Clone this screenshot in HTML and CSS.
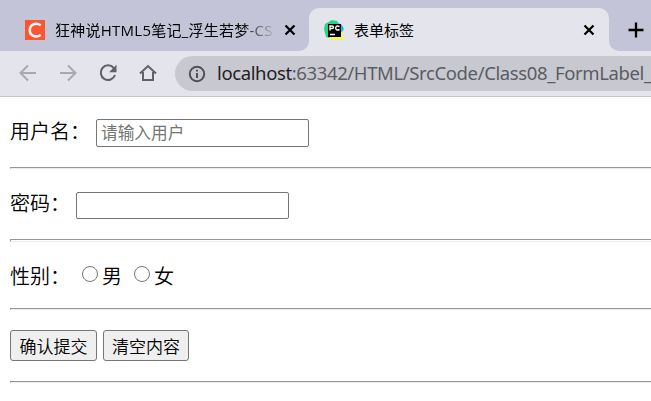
FILE: index.html
```html
<!DOCTYPE html>
<html lang="zh-CN">
<head>
<meta charset="utf-8">
<title>表单标签</title>
<link rel="stylesheet" href="styles.css">
</head>
<body>
<header class="tabs">
  <div class="tab tab-idle">
    <svg class="favicon" viewBox="0 0 20 20"><path fill="#fc5531" d="M0 0h20v20H0z"/><path d="M15.8 5.300C10.500 1.800 4.800 4.800 4.800 10.300c0 5.500 5.700 7.700 11 4.700" fill="none" stroke="#fff" stroke-width="2.500"/></svg>
    <span class="title title-fade">狂神说HTML5笔记_浮生若梦-CS</span>
    <svg class="close" viewBox="0 0 12 12"><path d="M1.500 1.500l9 9m0-9l-9 9"/></svg>
  </div>
  <div class="tab tab-active">
    <svg class="favicon" viewBox="0 0 20 20"><path fill="#21d789" d="M1 4L8 0l5 1 3 5-4 11-7 1-3-1L0 9z"/><path fill="#fcf84a" d="M13 8l5 1 2 10-8 1-7-1 2-5z"/><path fill="#07c3f2" d="M14 3l4 2 2 4-2 3-4-2z"/><path d="M4 4h13v13H4z"/><path d="M6 10.500V6h2q1.500 0 1.500 1.200T8 8.500H6M15.500 6.500q-3.800-1.500-3.800 1.500t3.800 1.500M6 14.500h5" fill="none" stroke="#fff" stroke-width="1.400"/></svg>
    <span class="title">表单标签</span>
    <svg class="close" viewBox="0 0 12 12"><path d="M1.500 1.500l9 9m0-9l-9 9"/></svg>
  </div>
  <div class="tab-end"><svg class="plus" viewBox="0 0 16 16"><path d="M8 .5v15M.5 8h15"/></svg></div>
</header>
<nav class="toolbar">
  <svg class="nav dim" viewBox="0 0 18 18"><path d="M17 9H2m7-7.500L1.500 9 9 16.500"/></svg>
  <svg class="nav dim" viewBox="0 0 18 18"><path d="M1 9h15M9 1.500L16.500 9 9 16.500"/></svg>
  <svg class="nav" viewBox="0 0 18 18"><path d="M14.700 4A7.300 7.300 0 1 0 16 11"/><path class="solid" d="M17.500.8v7.400h-7.400z"/></svg>
  <svg class="nav" viewBox="0 0 18 18"><path d="M1 9.500L9 2l8 7.500M4 8v8h10V8"/></svg>
  <div class="address">
    <svg class="info" viewBox="0 0 18 18"><circle cx="9" cy="9" r="7.200"/><path d="M9 8v5M9 4.700v1.900"/></svg>
    <span class="url"><span class="host">localhost</span>:63342/HTML/SrcCode/Class08_FormLabel_</span>
  </div>
</nav>
<main class="page">
  <form>
    <div class="row row-user"><label>用户名：</label><input class="field" type="text" placeholder="请输入用户"></div>
    <div class="rule"></div>
    <div class="row row-pass"><label>密码：</label><input class="field field-pass" type="password"></div>
    <div class="rule rule-tall"></div>
    <div class="row row-sex"><label>性别：</label><input class="radio first" type="radio" name="sex"><span>男</span><input class="radio second" type="radio" name="sex"><span>女</span></div>
    <div class="rule"></div>
    <div class="row row-buttons"><button class="submit" type="button">确认提交</button><button class="reset" type="button">清空内容</button></div>
    <div class="rule"></div>
  </form>
</main>
</body>
</html>
```
FILE: styles.css
```css
* { box-sizing: border-box; }
body {
  margin: 0;
  width: 651px;
  height: 401px;
  overflow: hidden;
  background: #fff;
  color: #000;
  font-family: "Noto Sans CJK SC", sans-serif;
  font-weight: 350;
}
svg { display: block; flex: none; }
.tabs { display: flex; height: 51px; padding-top: 8px; background: #e4e4ec; box-shadow: inset 0 24px #c4c4d8; }
.tab { display: flex; height: 43px; }
.tab-idle { width: 309px; padding-left: 25px; background: #c4c4d8; border-bottom-right-radius: 10px; }
.tab-active { width: 300px; padding-left: 15px; background: #e4e4ec; border-radius: 10px 10px 0 0; }
.tab-end { flex: 1; padding: 14px 0 0 20px; background: #c4c4d8; border-bottom-left-radius: 10px; }
.favicon { width: 20px; height: 20px; margin-top: 12px; }
.title { flex: none; width: 219px; margin: 11px 0 0 10px; font: 400 15px/22px "Open Sans", "Noto Sans CJK SC", sans-serif; white-space: nowrap; overflow: hidden; }
.tab-active .title { width: 217px; }
.title-fade { letter-spacing: 0.25px; color: transparent; background: linear-gradient(90deg, #000 185px, #b4b4c4 219px); background-clip: text; -webkit-background-clip: text; }
.close { width: 12px; height: 12px; margin: 16px 0 0 10px; fill: none; stroke: #000; stroke-width: 2.2; }
.tab-active .close { margin-left: 12px; }
.plus { width: 16px; height: 16px; margin-left: -1px; fill: none; stroke: #000; stroke-width: 2.3; }
.toolbar { display: flex; height: 46px; padding: 5px 0 0 19px; background: #e4e4ec; border-bottom: 1px solid #c6c6cf; }
.nav { width: 18px; height: 18px; margin: 8px 22px 0 0; fill: none; stroke: #5f6068; stroke-width: 2; }
.nav:nth-of-type(4) { margin: 8px 18px 0 0; }
.dim { stroke: #a8a8b0; }
.solid { fill: #5f6068; stroke: none; }
.address { display: flex; flex: 1; height: 35px; padding-left: 13px; border-radius: 18px 0 0 18px; background: #c8c8d0; overflow: hidden; }
.info { width: 18px; height: 18px; margin-top: 9px; fill: none; stroke: #505158; stroke-width: 2; }
.url { margin: 3px 0 0 11px; font: 400 18.5px/28px "Noto Sans", sans-serif; letter-spacing: -0.38px; color: #5b5c63; white-space: nowrap; }
.host { color: #202124; }
.page { padding-left: 10px; font-size: 20px; line-height: 28px; }
.row { display: flex; }
.row label { white-space: nowrap; }
.row-user { height: 70px; padding-top: 21px; }
.row-pass { height: 70px; padding-top: 22px; }
.row-user label { margin-top: -1px; }
.row-pass label { margin-top: -2px; }
.row-sex { height: 66px; padding-top: 20px; }
.row-buttons { height: 71px; padding-top: 20px; gap: 6px; }
.rule { height: 2px; border-top: 1px solid #979797; border-bottom: 1px solid #ededed; border-left: 1px solid #979797; }
.rule-tall { height: 3px; }
.field { width: 213px; height: 28px; margin: 1px 0 0 6px; padding: 0 4px 2px; border: 1px solid #767676; border-radius: 2px; font: 400 16.7px/24px "Noto Sans CJK SC", sans-serif; }
.field-pass { height: 27px; }
.field::placeholder { color: #757575; }
.radio { width: 16px; height: 16px; appearance: none; border: 1px solid #767676; border-radius: 50%; }
.first { margin: 4px 4px 0 12px; }
.second { margin: 4px 4px 0 12px; }
button { height: 31px; padding: 0; border: 1px solid #767676; border-radius: 3px; background: #efefef; color: #000; font: 350 17px/24px "Noto Sans CJK SC", sans-serif; }
.submit { width: 87px; }
.reset { width: 86px; }
```
